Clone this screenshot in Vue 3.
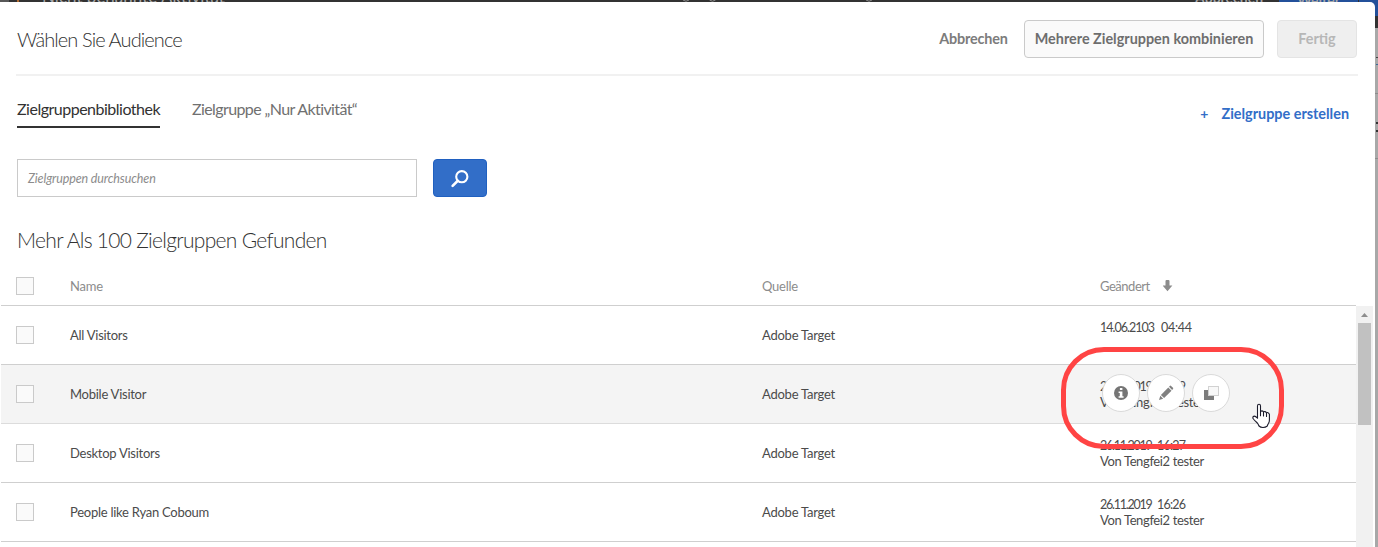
<script setup>
const audiences = [
  { name: 'All Visitors', source: 'Adobe Target', date: '14.06.2103', time: '04:44', author: '', wide: true },
  { name: 'Mobile Visitor', source: 'Adobe Target', date: '26.11.2019', time: '16:29', author: 'Von Tengfei2 tester', hovered: true },
  { name: 'Desktop Visitors', source: 'Adobe Target', date: '26.11.2019', time: '16:27', author: 'Von Tengfei2 tester' },
  { name: 'People like Ryan Coboum', source: 'Adobe Target', date: '26.11.2019', time: '16:26', author: 'Von Tengfei2 tester' },
]
</script>

<template>
  <div class="page">
    <div class="backdrop">
      <div class="topbar">
        <span class="logo"></span>
        <span class="crumb"></span>
        <span class="activity">Nicht benannte Aktivität</span>
        <svg class="steps" width="190" height="2" viewBox="0 0 190 2" fill="none" stroke="#8a8a8a"><path d="M0 0Q3 2.500 6 0M26.500 0Q29.500 2.500 32.500 0M183 0Q186 2.500 189 0" /></svg>
        <span class="cancel">Abbrechen</span>
        <span class="next">Weiter</span>
        <span class="more"></span>
      </div>
      <div class="edge"><i class="mark m1"></i><i class="rule"></i><i class="mark m2"></i><i class="rule"></i></div>
    </div>

    <section class="modal">
      <header class="head">
        <h1>Wählen Sie Audience</h1>
        <button class="btn quiet">Abbrechen</button>
        <button class="btn combine">Mehrere Zielgruppen kombinieren</button>
        <button class="btn done">Fertig</button>
      </header>

      <nav class="tabs">
        <a class="tab active">Zielgruppenbibliothek</a>
        <a class="tab second">Zielgruppe „Nur Aktivität“</a>
        <a class="create"><span class="plus">+</span><span class="create-label">Zielgruppe erstellen</span></a>
      </nav>

      <div class="search">
        <div class="field">Zielgruppen durchsuchen</div>
        <button class="go">
          <svg width="20" height="20" viewBox="0 0 20 20" fill="none" stroke="#fff">
            <circle cx="11.800" cy="8.700" r="5.600" stroke-width="2.1" />
            <path d="M7.800 12.800 2.600 17.900" stroke-width="2.600" stroke-linecap="round" />
          </svg>
        </button>
      </div>

      <h2>Mehr Als 100 Zielgruppen Gefunden</h2>

      <div class="thead">
        <span class="box"></span>
        <span class="h-name">Name</span>
        <span class="h-source">Quelle</span>
        <span class="sort"><span class="h-changed">Geändert</span>
          <svg width="10" height="12" viewBox="0 0 10 12"><path d="M2.500 1Q2.500 0 3.500 0h2Q6.500 0 6.500 1V5.500h2.900L4.500 11.300-.4 5.500h2.900z" fill="#8c8c8c" /></svg>
        </span>
      </div>

      <div class="list">
        <div class="rows">
          <div v-for="a in audiences" :key="a.name" class="row" :class="{ hovered: a.hovered }">
            <span class="box"></span>
            <span class="name">{{ a.name }}</span>
            <span class="source">{{ a.source }}</span>
            <div class="changed">
              <div class="stamp" :class="{ wide: a.wide }"><span class="date">{{ a.date }}</span><span class="time">{{ a.time }}</span></div>
              <div class="author">{{ a.author }}</div>
              <div v-if="a.hovered" class="actions">
                <span class="round">
                  <svg width="16" height="16" viewBox="0 0 16 16"><circle cx="8" cy="8" r="7" fill="#757575" /><path d="M6.900 2.900h2.500v2.200H6.900zM5.600 6.400h3.800v4.900h1.200v1.500H5.600v-1.500h1.200V7.900H5.600z" fill="#fff" /></svg>
                </span>
                <span class="round">
                  <svg width="16" height="16" viewBox="0 0 16 16" fill="#808080"><path d="M1 15 2.300 10.800 5.200 13.700z" /><path d="M2.900 9.900 10.300 2.500 13.500 5.700 6.100 13.100z" /><path d="M11 1.800 12 .8Q12.500.4 13.100.9L15 2.800Q15.500 3.400 15 3.900L14.100 5z" /></svg>
                </span>
                <span class="round">
                  <svg width="16" height="16" viewBox="0 0 16 16"><path d="M1 5h4v6h6v4H1z" fill="#7c7c7c" /><rect x="5.500" y="1.500" width="10" height="9" fill="#f8f8f8" stroke="#a6a6a6" stroke-dasharray="1 1" /></svg>
                </span>
              </div>
            </div>
          </div>
        </div>
        <div class="scrollbar">
          <svg width="17" height="17" viewBox="0 0 17 17"><path d="M5 11h7L8.500 7z" fill="#8d8d8d" /></svg>
          <div class="thumb"></div>
        </div>
      </div>
    </section>

    <div class="callout"></div>
    <svg class="pointer" width="19" height="26" viewBox="0 0 19 26" fill="#fff" stroke="#1b1b2b" stroke-width="1.100" stroke-linejoin="round" stroke-linecap="round">
      <path d="M5.500 15.200V3Q5.500 1.300 7 1.300T8.500 3V9Q8.800 7.800 10 7.900T11.500 9.200Q12 8.400 13 8.600T14.500 10Q15 9.300 16 9.700T17.400 11.300V17Q17.400 19 16.500 20.300 15.500 21.500 15.300 23 13.500 24.500 11 24.500T7 23Q6.200 20.500 4.100 18.800 1 16 .8 15 .7 13.300 2.100 13.100 3.500 13 5.500 15.200M8.500 9V12.800M11.500 9.400V13M14.500 10.200V13.500" />
    </svg>
  </div>
</template>

<style>
body { background: #fff; overflow: hidden; }
</style>

<style scoped>
* { box-sizing: border-box; }
.page { position: relative; width: 1378px; height: 547px; overflow: hidden; font-family: Lato, "Open Sans", sans-serif; font-size: 13px; color: #4b4b4b; }
.backdrop { height: 547px; background: #a8a8a8; }
.topbar { position: relative; height: 28px; background: #323232; color: #a8a8a8; display: flex; }
.topbar span { height: 16px; flex: none; }
.logo { width: 9px; background: #585858; margin-top: -14px; }
.crumb { width: 2px; margin-left: 8px; background: #b06a30; }
.activity { margin-left: 23px; width: 188px; font-size: 17px; line-height: 16px; margin-top: -11px; white-space: nowrap; }
.steps { margin-left: 453px; }
.cancel { margin-left: auto; width: 84px; font-size: 14px; font-weight: 700; line-height: 16px; margin-top: -10px; }
.next { width: 79px; background: #23509a; font-size: 14px; font-weight: 700; text-align: center; line-height: 0; margin-right: 1px; }
.more { width: 19px; background: #23509a; }
.edge { display: flex; flex-direction: column; align-items: flex-end; }
.mark { width: 2px; height: 8px; border-top: 1px solid #444; border-bottom: 1px solid #3d6b99; margin-top: 29px; }
.rule { width: 3px; height: 1px; background: #8c8c8c; margin-top: 28px; }
.m2 { height: 10px; border-width: 2px; border-color: #333; margin-top: 28px; }
.m2 + .rule { margin-top: 26px; }

.modal { position: absolute; left: 0; top: 2px; width: 1375px; height: 545px; background: #fff; border-top-right-radius: 5px; display: flex; flex-direction: column; overflow: hidden; }
.head { height: 74px; flex: none; margin: 0 17px 0 16px; border-bottom: 2px solid #f1f1f1; display: flex; align-items: center; }
h1, h2 { margin: 0; font-weight: 300; color: #323232; white-space: nowrap; }
h1 { flex: 1; font-size: 20px; padding: 2px 0 0 1px; letter-spacing: -.9px; line-height: 24px; }
.btn { font: 700 14.4px/20px Lato, sans-serif; height: 38px; padding: 0; border: 1px solid transparent; border-radius: 4px; background: none; color: #6e6e6e; white-space: nowrap; margin-bottom: -1px; }
.quiet { width: 71px; color: #7c7c7c; margin-right: 15px; letter-spacing: -.15px; }
.combine { width: 240px; background: #fafafa; border-color: #cacaca; margin-right: 13px; }
.done { width: 80px; background: #efefef; border-color: #e4e4e4; color: #b7b7b7; margin-right: 1px; }

.tabs { height: 52px; flex: none; padding: 18px 26px 0 17px; display: flex; align-items: flex-start; font-size: 16px; white-space: nowrap; }
.tab { height: 34px; line-height: 30px; color: #707070; letter-spacing: -.61px; }
.active { width: 143px; color: #323232; border-bottom: 2px solid #323232; margin-right: 32px; letter-spacing: -.5px; }
.create { margin-left: auto; display: flex; color: #326ec8; font-size: 14.4px; font-weight: 700; line-height: 40px; }
.plus { margin-right: 13px; font-size: 14px; }

.search { display: flex; margin: 31px 0 0 17px; gap: 16px; }
.field { width: 400px; height: 38px; border: 1px solid #cacaca; padding-left: 10px; font-size: 12.5px; letter-spacing: -.12px; font-style: italic; line-height: 37px; color: #8c8c8c; }
.go { width: 54px; height: 38px; padding: 0; border: 1px solid #2060c0; border-radius: 4px; background: #326ec8; display: flex; align-items: center; justify-content: center; }
h2 { margin: 30px 0 0 17px; font-size: 21px; line-height: 26px; letter-spacing: -.7px; }

.thead, .row { display: grid; grid-template-columns: 54px 692px 338px 1fr; padding-left: 15px; align-items: center; white-space: nowrap; letter-spacing: -.24px; }
.thead { margin: 14px 0 0 1px; height: 38px; margin-bottom: 1px; color: #8c8c8c; }
.box { width: 18px; height: 18px; border: 1px solid #cacaca; background: #fafafa; }
.h-source, .name { letter-spacing: -.26px; }
.h-changed { width: 50px; letter-spacing: -.48px; }
.sort { display: flex; align-items: center; gap: 13px; }
.sort svg { margin-top: -1px; }
.list { display: flex; margin-left: 1px; height: 241px; }
.rows { width: 1355px; border-top: 1px solid #cfcfcf; margin-top: -1px; }
.row { height: 59px; border-bottom: 1px solid #cfcfcf; }
.row.hovered { background: #f4f4f4; border-color: #dcdcdc; }
.changed { position: relative; line-height: 16px; height: 32px; }
.stamp { display: flex; font-size: 12.5px; height: 16px; line-height: 18px; }
.date { width: 57px; letter-spacing: -1.25px; }
.time { letter-spacing: -.8px; }
.wide .date { width: 61px; letter-spacing: -1px; }
.wide .time { letter-spacing: -.25px; }
.author { letter-spacing: -.37px; }
.actions { position: absolute; left: 2px; top: -4px; display: flex; gap: 7px; }
.round { width: 38px; height: 38px; border-radius: 50%; border: 1px solid #dadada; background: #fff; display: flex; align-items: center; justify-content: center; }
.scrollbar { width: 17px; background: #f1f1f1; }
.scrollbar svg { display: block; }
.thumb { width: 13px; height: 102px; margin-left: 2px; background: #c1c1c1; }

.callout { position: absolute; left: 1061px; top: 347px; width: 223px; height: 102px; border: 5px solid #ff4444; border-radius: 43px; }
.pointer { position: absolute; left: 1252px; top: 403px; }
</style>
